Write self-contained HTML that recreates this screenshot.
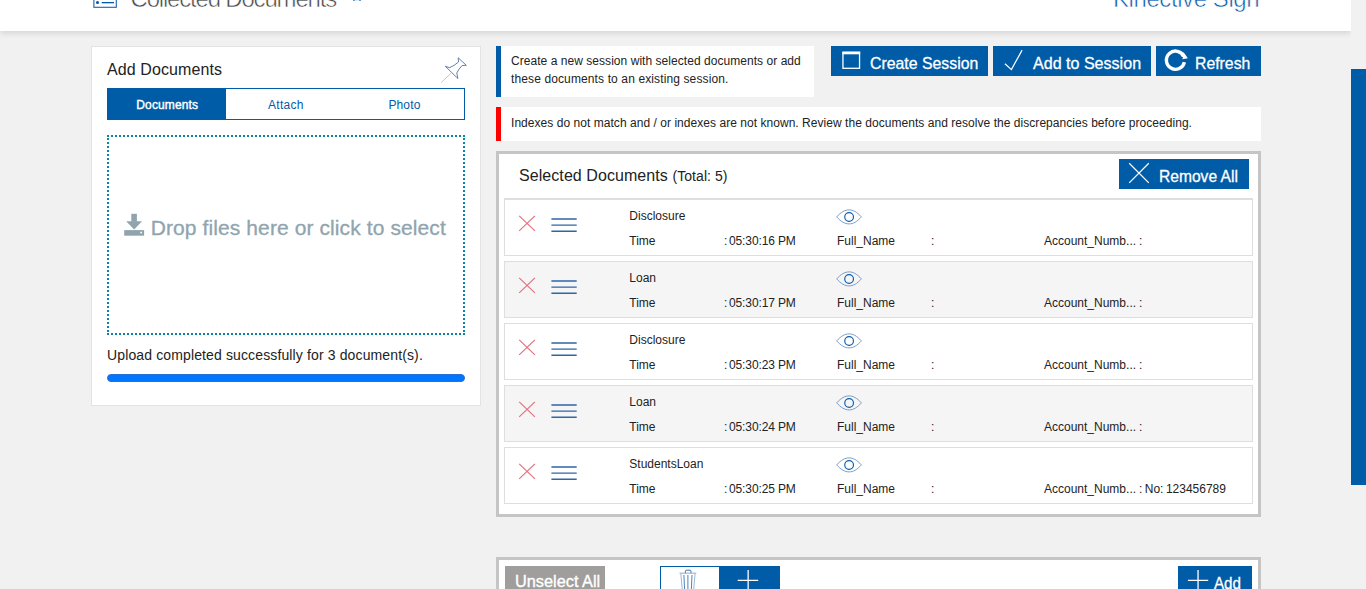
<!DOCTYPE html>
<html>
<head>
<meta charset="utf-8">
<title>Collected Documents</title>
<style>
*{box-sizing:border-box;margin:0;padding:0}
html,body{width:1366px;height:589px;overflow:hidden;background:#f1f1f1;font-family:"Liberation Sans",sans-serif;color:#222}
.abs{position:absolute}
.t{position:absolute;white-space:nowrap;line-height:1;transform-origin:0 0}
#hdr{left:0;top:0;width:1351px;height:31px;background:#fff;box-shadow:0 2px 6px rgba(0,0,0,.13)}
#thumb{left:1351px;top:69px;width:15px;height:416px;background:#005ca6}
.blue{background:#005ca6;color:#fff}
.btn{position:absolute;background:#005ca6;color:#fff}
/* left panel */
#lp{left:91px;top:46px;width:390px;height:360px;background:#fff;border:1px solid #e3e3e3}
#tabs{left:107px;top:88px;width:358px;height:32px;border:1px solid #005ca6;background:#fff}
#tabA{left:107px;top:88px;width:119px;height:32px;background:#005ca6}
#dz{left:107px;top:135px;width:358px;height:200px;border:2px dotted #0a86a4}
#prog{left:107px;top:374px;width:358px;height:8px;border-radius:4px;background:#0075ff;border:1px solid #2a6fd6}
/* info boxes */
#info{left:496px;top:46px;width:318px;height:51px;background:#fff;border-left:5px solid #005ca6}
#warn{left:496px;top:107px;width:765px;height:34px;background:#fff;border-left:5px solid #f00}
/* selected panel */
#sp{left:496px;top:151px;width:765px;height:366px;background:#fff;border:3px solid #c5c5c5}
.row{position:absolute;left:504px;width:749px;border:1px solid #dedede;background:#fff}
.row.alt{background:#f5f5f5}
.r12{font-size:12px;color:#222}
#sp2{left:496px;top:557px;width:765px;height:60px;background:#fff;border:3px solid #c5c5c5}
</style>
</head>
<body>
<div class="abs" style="left:0;top:0;width:1351px;height:60px;overflow:hidden"><div class="abs" id="hdr"></div></div>
<div class="abs" id="thumb"></div>

<!-- header content -->
<svg class="abs" style="left:90px;top:0px" width="30" height="12" viewBox="0 0 30 12"><rect x="3.9" y="-10" width="22.4" height="17.3" fill="none" stroke="#1a63ad" stroke-width="1.1"/><circle cx="7.5" cy="2.6" r="1.5" fill="#0050a8"/><rect x="11.7" y="2" width="12.3" height="1.3" fill="#005ca6"/></svg>
<div class="t" id="ttl" style="left:130.5px;top:-12.6px;font-size:24px;color:#444;letter-spacing:-1.19px;-webkit-text-stroke:0.55px #fff">Collected Documents</div>
<div class="t" id="brand" style="left:1113px;top:-12.6px;font-size:24px;color:#0d5cab;letter-spacing:-0.42px;-webkit-text-stroke:0.55px #fff">Kinective Sign</div>

<div class="abs" style="left:353px;top:0;width:2px;height:1px;background:#6f9bc9"></div><div class="abs" style="left:359px;top:0;width:2px;height:1px;background:#6f9bc9"></div><div class="abs" style="left:355px;top:0;width:4px;height:1px;background:#dfeaf2"></div>
<!-- left panel -->
<div class="abs" id="lp"></div>
<div class="t" id="addt" style="left:107px;top:62px;font-size:16px;color:#222;letter-spacing:0.1px">Add Documents</div>
<svg class="abs" id="pin" style="left:440px;top:54px" width="30" height="30" viewBox="0 0 30 30"><g fill="none" stroke-linejoin="miter"><path d="M18.2 3.8 L26.3 11.3 L22 11.6 Q18.6 15.1 16.8 19 L17.9 24.5 L5.3 12.3 L9.7 13.7 Q14.4 11.6 18.5 8 Z" stroke="#4f72a8" stroke-width="0.9"/><path d="M11.4 18.8 L1.2 28.6" stroke="#b9a9c4" stroke-width="0.7"/></g></svg>
<div class="abs" id="tabs"></div>
<div class="abs" id="tabA"></div>
<div class="t" id="tab1" style="left:136.3px;top:99px;font-size:12px;color:#fff;letter-spacing:0.12px;-webkit-text-stroke:0.4px #fff">Documents</div>
<div class="t" id="tab2" style="left:268px;top:99px;font-size:12px;color:#005ca6;letter-spacing:0.27px">Attach</div>
<div class="t" id="tab3" style="left:388.4px;top:99px;font-size:12px;color:#005ca6;letter-spacing:0.14px">Photo</div>
<div class="abs" id="dz"></div>
<svg class="abs" id="dl" style="left:120px;top:210px" width="30" height="30" viewBox="0 0 30 30"><g fill="#90a4ae"><rect x="11.3" y="3.8" width="5.6" height="8"/><path d="M6.2 11.3 H22 L14.1 19.6 Z"/><rect x="4.2" y="20.1" width="19.9" height="5.6"/></g><rect x="20.3" y="21.8" width="1.7" height="1.5" fill="#fff"/></svg>
<div class="t" id="drop" style="left:150.7px;top:217px;font-size:21px;color:#90a4ae;letter-spacing:0.1px;-webkit-text-stroke:0.3px #90a4ae">Drop files here or click to select</div>
<div class="t" id="upl" style="left:107px;top:348px;font-size:14px;color:#222;letter-spacing:0.13px">Upload completed successfully for 3 document(s).</div>
<div class="abs" id="prog"></div>

<!-- info -->
<div class="abs" id="info"></div>
<div class="t" id="inf1" style="left:511px;top:55px;font-size:12px;color:#222;letter-spacing:0.045px">Create a new session with selected documents or add</div>
<div class="t" id="inf2" style="left:511px;top:73px;font-size:12px;color:#222;letter-spacing:0.12px">these documents to an existing session.</div>
<div class="abs" id="warn"></div>
<div class="t" id="wrn1" style="left:511px;top:117px;font-size:12px;color:#222;letter-spacing:0.043px">Indexes do not match and / or indexes are not known. Review the documents and resolve the discrepancies before proceeding.</div>

<!-- buttons -->
<div class="btn" style="left:831px;top:46px;width:157px;height:30px"></div>
<div class="btn" style="left:993px;top:46px;width:158px;height:30px"></div>
<div class="btn" style="left:1156px;top:46px;width:105px;height:30px"></div>
<svg class="abs" style="left:840px;top:49px" width="24" height="24" viewBox="0 0 24 24"><rect x="2.95" y="3.3" width="16.6" height="16" fill="none" stroke="#fff" stroke-width="1.3"/><rect x="2.35" y="2.7" width="17.8" height="2.6" fill="#fff"/></svg>
<div class="t" id="b1" style="left:870.3px;top:55.4px;font-size:17px;color:#fff;transform:scaleX(0.932);-webkit-text-stroke:0.3px #fff">Create Session</div>
<svg class="abs" style="left:1000px;top:46px" width="28" height="28" viewBox="0 0 28 28"><path d="M4.9 17.8 L11.4 23.6 L22.1 4.1" fill="none" stroke="#fff" stroke-width="1.25" stroke-linejoin="miter"/></svg>
<div class="t" id="b2" style="left:1032.5px;top:55.4px;font-size:17px;color:#fff;transform:scaleX(0.945);-webkit-text-stroke:0.3px #fff">Add to Session</div>
<svg class="abs" style="left:1160px;top:46px" width="32" height="30" viewBox="0 0 32 30"><path d="M24.40 16.09 A9.1 9.1 0 1 1 23.81 10.50" fill="none" stroke="#fff" stroke-width="3.4"/><path d="M20.6 9.6 L23.6 6.2 L27.9 12.3 L22.2 13.2 L23.2 11.4 Z" fill="#fff"/></svg>
<div class="t" id="b3" style="left:1195.3px;top:55.4px;font-size:17px;color:#fff;transform:scaleX(0.93);-webkit-text-stroke:0.3px #fff">Refresh</div>

<!-- selected docs -->
<div class="abs" id="sp"></div>
<div class="t" id="sel" style="left:519px;top:168px;font-size:16px;color:#222;letter-spacing:0.07px">Selected Documents <span style="font-size:14px">(Total: 5)</span></div>
<div class="btn" style="left:1119px;top:159px;width:130px;height:30px"></div>
<svg class="abs" style="left:1127px;top:161px" width="24" height="24" viewBox="0 0 24 24"><path d="M2.2 2.2 L21.8 21.9 M21.8 2.2 L2.2 21.9" stroke="#fff" stroke-width="1.25" fill="none"/></svg>
<div class="t" id="b4" style="left:1158.8px;top:167.6px;font-size:16.5px;color:#fff;transform:scaleX(0.945);-webkit-text-stroke:0.3px #fff">Remove All</div>

<div id="rows">
<div class="row" style="top:198px;height:58px;border-top-width:2px"></div>
<svg class="abs" style="left:516px;top:213.0px" width="22" height="20" viewBox="0 0 22 20"><path d="M3.2 2.9 L18.9 17.9 M18.9 2.9 L3.2 17.9" stroke="#e2707f" stroke-width="1.15" fill="none"/></svg>
<svg class="abs" style="left:549px;top:215.0px" width="30" height="20" viewBox="0 0 30 20"><path d="M2.4 3.9 H27.7 M2.4 10.1 H27.7 M2.4 16.2 H27.7" stroke="#2f66a8" stroke-width="1.45" fill="none"/></svg>
<div class="t r12" style="left:629.3px;top:210px">Disclosure</div>
<div class="t r12" style="left:629.3px;top:235px">Time</div>
<div class="t r12" style="left:724px;top:235px;letter-spacing:-0.12px">:<span style="margin-left:1.8px">05:30:16 PM</span></div>
<svg class="abs" style="left:836px;top:209.0px" width="26" height="16" viewBox="0 0 26 16"><g fill="none"><path d="M0.7 7.9 C5 3 9 0.9 13.1 0.9 C17.2 0.9 21 3 25.4 7.9 C21 12.8 17.2 14.9 13.1 14.9 C9 14.9 5 12.8 0.7 7.9 Z" stroke="#5b86bb" stroke-width="0.8"/><circle cx="13.1" cy="8" r="4.35" stroke="#0a5cab" stroke-width="1.15"/></g></svg>
<div class="t r12" style="left:837px;top:235px">Full_Name</div>
<div class="t r12" style="left:931px;top:235px">:</div>
<div class="t r12" style="left:1044px;top:235px">Account_Numb...</div>
<div class="t r12" style="left:1139px;top:235px;word-spacing:-0.9px">: </div>
<div class="row alt" style="top:261px;height:57px"></div>
<svg class="abs" style="left:516px;top:275.0px" width="22" height="20" viewBox="0 0 22 20"><path d="M3.2 2.9 L18.9 17.9 M18.9 2.9 L3.2 17.9" stroke="#e2707f" stroke-width="1.15" fill="none"/></svg>
<svg class="abs" style="left:549px;top:277.0px" width="30" height="20" viewBox="0 0 30 20"><path d="M2.4 3.9 H27.7 M2.4 10.1 H27.7 M2.4 16.2 H27.7" stroke="#2f66a8" stroke-width="1.45" fill="none"/></svg>
<div class="t r12" style="left:629.3px;top:272px">Loan</div>
<div class="t r12" style="left:629.3px;top:297px">Time</div>
<div class="t r12" style="left:724px;top:297px;letter-spacing:-0.12px">:<span style="margin-left:1.8px">05:30:17 PM</span></div>
<svg class="abs" style="left:836px;top:271.0px" width="26" height="16" viewBox="0 0 26 16"><g fill="none"><path d="M0.7 7.9 C5 3 9 0.9 13.1 0.9 C17.2 0.9 21 3 25.4 7.9 C21 12.8 17.2 14.9 13.1 14.9 C9 14.9 5 12.8 0.7 7.9 Z" stroke="#5b86bb" stroke-width="0.8"/><circle cx="13.1" cy="8" r="4.35" stroke="#0a5cab" stroke-width="1.15"/></g></svg>
<div class="t r12" style="left:837px;top:297px">Full_Name</div>
<div class="t r12" style="left:931px;top:297px">:</div>
<div class="t r12" style="left:1044px;top:297px">Account_Numb...</div>
<div class="t r12" style="left:1139px;top:297px;word-spacing:-0.9px">: </div>
<div class="row" style="top:323px;height:57px"></div>
<svg class="abs" style="left:516px;top:337.0px" width="22" height="20" viewBox="0 0 22 20"><path d="M3.2 2.9 L18.9 17.9 M18.9 2.9 L3.2 17.9" stroke="#e2707f" stroke-width="1.15" fill="none"/></svg>
<svg class="abs" style="left:549px;top:339.0px" width="30" height="20" viewBox="0 0 30 20"><path d="M2.4 3.9 H27.7 M2.4 10.1 H27.7 M2.4 16.2 H27.7" stroke="#2f66a8" stroke-width="1.45" fill="none"/></svg>
<div class="t r12" style="left:629.3px;top:334px">Disclosure</div>
<div class="t r12" style="left:629.3px;top:359px">Time</div>
<div class="t r12" style="left:724px;top:359px;letter-spacing:-0.12px">:<span style="margin-left:1.8px">05:30:23 PM</span></div>
<svg class="abs" style="left:836px;top:333.0px" width="26" height="16" viewBox="0 0 26 16"><g fill="none"><path d="M0.7 7.9 C5 3 9 0.9 13.1 0.9 C17.2 0.9 21 3 25.4 7.9 C21 12.8 17.2 14.9 13.1 14.9 C9 14.9 5 12.8 0.7 7.9 Z" stroke="#5b86bb" stroke-width="0.8"/><circle cx="13.1" cy="8" r="4.35" stroke="#0a5cab" stroke-width="1.15"/></g></svg>
<div class="t r12" style="left:837px;top:359px">Full_Name</div>
<div class="t r12" style="left:931px;top:359px">:</div>
<div class="t r12" style="left:1044px;top:359px">Account_Numb...</div>
<div class="t r12" style="left:1139px;top:359px;word-spacing:-0.9px">: </div>
<div class="row alt" style="top:385px;height:57px"></div>
<svg class="abs" style="left:516px;top:399.0px" width="22" height="20" viewBox="0 0 22 20"><path d="M3.2 2.9 L18.9 17.9 M18.9 2.9 L3.2 17.9" stroke="#e2707f" stroke-width="1.15" fill="none"/></svg>
<svg class="abs" style="left:549px;top:401.0px" width="30" height="20" viewBox="0 0 30 20"><path d="M2.4 3.9 H27.7 M2.4 10.1 H27.7 M2.4 16.2 H27.7" stroke="#2f66a8" stroke-width="1.45" fill="none"/></svg>
<div class="t r12" style="left:629.3px;top:396px">Loan</div>
<div class="t r12" style="left:629.3px;top:421px">Time</div>
<div class="t r12" style="left:724px;top:421px;letter-spacing:-0.12px">:<span style="margin-left:1.8px">05:30:24 PM</span></div>
<svg class="abs" style="left:836px;top:395.0px" width="26" height="16" viewBox="0 0 26 16"><g fill="none"><path d="M0.7 7.9 C5 3 9 0.9 13.1 0.9 C17.2 0.9 21 3 25.4 7.9 C21 12.8 17.2 14.9 13.1 14.9 C9 14.9 5 12.8 0.7 7.9 Z" stroke="#5b86bb" stroke-width="0.8"/><circle cx="13.1" cy="8" r="4.35" stroke="#0a5cab" stroke-width="1.15"/></g></svg>
<div class="t r12" style="left:837px;top:421px">Full_Name</div>
<div class="t r12" style="left:931px;top:421px">:</div>
<div class="t r12" style="left:1044px;top:421px">Account_Numb...</div>
<div class="t r12" style="left:1139px;top:421px;word-spacing:-0.9px">: </div>
<div class="row" style="top:447px;height:57px"></div>
<svg class="abs" style="left:516px;top:461.0px" width="22" height="20" viewBox="0 0 22 20"><path d="M3.2 2.9 L18.9 17.9 M18.9 2.9 L3.2 17.9" stroke="#e2707f" stroke-width="1.15" fill="none"/></svg>
<svg class="abs" style="left:549px;top:463.0px" width="30" height="20" viewBox="0 0 30 20"><path d="M2.4 3.9 H27.7 M2.4 10.1 H27.7 M2.4 16.2 H27.7" stroke="#2f66a8" stroke-width="1.45" fill="none"/></svg>
<div class="t r12" style="left:629.3px;top:458px">StudentsLoan</div>
<div class="t r12" style="left:629.3px;top:483px">Time</div>
<div class="t r12" style="left:724px;top:483px;letter-spacing:-0.12px">:<span style="margin-left:1.8px">05:30:25 PM</span></div>
<svg class="abs" style="left:836px;top:457.0px" width="26" height="16" viewBox="0 0 26 16"><g fill="none"><path d="M0.7 7.9 C5 3 9 0.9 13.1 0.9 C17.2 0.9 21 3 25.4 7.9 C21 12.8 17.2 14.9 13.1 14.9 C9 14.9 5 12.8 0.7 7.9 Z" stroke="#5b86bb" stroke-width="0.8"/><circle cx="13.1" cy="8" r="4.35" stroke="#0a5cab" stroke-width="1.15"/></g></svg>
<div class="t r12" style="left:837px;top:483px">Full_Name</div>
<div class="t r12" style="left:931px;top:483px">:</div>
<div class="t r12" style="left:1044px;top:483px">Account_Numb...</div>
<div class="t r12" style="left:1139px;top:483px;word-spacing:-0.9px">: No: 123456789</div>
</div><!--endrows-->

<!-- second panel -->
<div class="abs" id="sp2"></div>
<div class="abs" style="left:505px;top:566px;width:100px;height:30px;background:#a09e9d"></div>
<div class="t" id="uns" style="left:514.6px;top:572.6px;font-size:16.5px;color:#fff;transform:scaleX(0.988);-webkit-text-stroke:0.35px #fff">Unselect All</div>
<div class="abs" style="left:660px;top:566px;width:120px;height:30px;background:#fff;border:1px solid #005ca6"></div>
<div class="abs" style="left:719px;top:566px;width:61px;height:30px;background:#005ca6"></div>
<svg class="abs" style="left:676px;top:566px" width="24" height="24" viewBox="0 0 24 24"><g fill="none" stroke="#3b74b3" stroke-width="0.9"><path d="M9.4 7.1 V5.2 Q9.4 4.2 10.4 4.2 H14 Q15 4.2 15 5.2 V7.1" stroke="#2a64a8"/><path d="M3.5 7.2 H20.3" stroke="#7fa3cc"/><path d="M4.8 7.6 L6.3 24 M19.1 7.6 L17.6 24" stroke="#8fb0d4"/><path d="M7.9 9 L8.6 24 M11.9 9 V24 M16 9 L15.3 24"/></g></svg>
<svg class="abs" style="left:736px;top:568px" width="24" height="24" viewBox="0 0 24 24"><path d="M12.15 2 V24 M1.7 12.3 H22.2" stroke="#fff" stroke-width="1.3" fill="none"/></svg>
<div class="btn" style="left:1178px;top:566px;width:74px;height:30px"></div>
<svg class="abs" style="left:1186px;top:568px" width="24" height="24" viewBox="0 0 24 24"><path d="M12.05 2 V24 M1.9 12.3 H22.2" stroke="#fff" stroke-width="1.3" fill="none"/></svg>
<div class="t" id="b5" style="left:1213.7px;top:574.6px;font-size:16.5px;color:#fff;transform:scaleX(0.92);-webkit-text-stroke:0.3px #fff">Add</div>

</body>
</html>
